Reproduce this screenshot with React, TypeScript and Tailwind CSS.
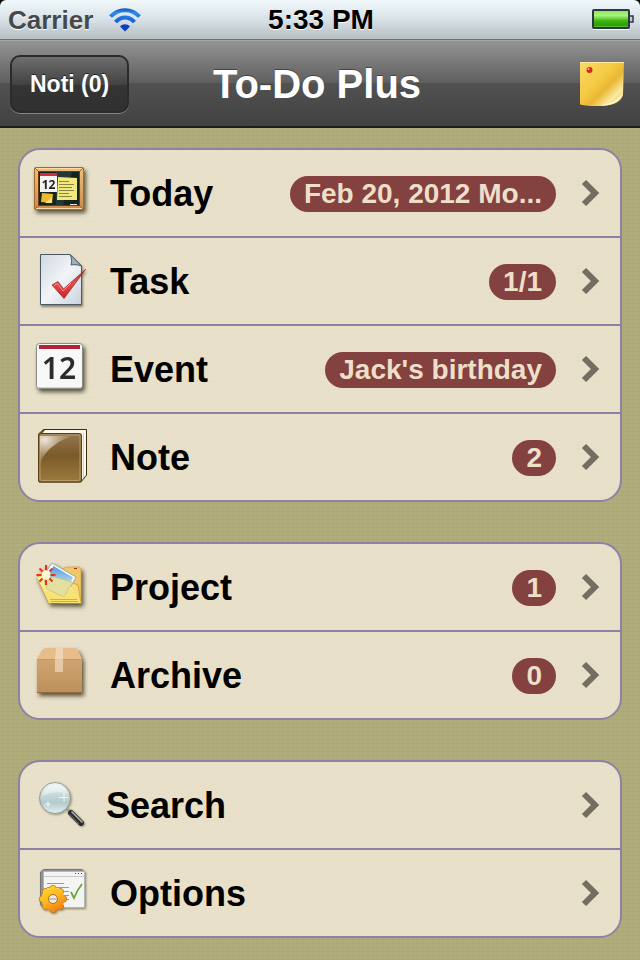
import type { ReactNode } from "react";

interface MenuItem {
  label: string;
  href: string;
  icon: ReactNode;
  badge?: string;
}

const SHADOW = "drop-shadow-[2px_3px_2px_rgba(40,32,10,0.75)]";

function TodayIcon() {
  return (
    <svg viewBox="0 0 64 64" className={`w-16 h-16 shrink-0 ${SHADOW}`} aria-hidden="true">
      <defs>
        <linearGradient id="frame" x1="0" y1="0" x2="0" y2="1">
          <stop offset="0" stopColor="#f3bd78" />
          <stop offset="1" stopColor="#cf8a48" />
        </linearGradient>
      </defs>
      <rect x="4.500" y="6.500" width="49" height="42" rx="1" fill="url(#frame)" stroke="#a3692e" />
      <path d="M5.500 7.500h47M5.500 47.500h47" stroke="#fbdca8" />
      <path d="M5 7l4 4M53 7l-4 4M5 48l4-4M53 48l-4-4" stroke="#9a602a" />
      <rect x="8.500" y="10.500" width="41" height="34" fill="#142420" stroke="#6b3e16" />
      <path d="M26 11h16l-9 33h-7z" fill="#2c4a46" opacity="0.6" />
      <rect x="10" y="12" width="17" height="19" fill="#f5f5f4" />
      <rect x="10" y="12" width="17" height="3" fill="#cf2f49" />
      <text x="18.500" y="27.500" textAnchor="middle" fontSize="12" fontWeight="700" fill="#222" fontFamily="Open Sans, sans-serif">12</text>
      <path d="M28 16l19 1v22H27z" fill="#f2e97c" />
      <path d="M29 20.500h10M29 23.500h15M29 26.500h13M29 29.500h15M29 32.500h10M29 35.500h13" stroke="#8a8446" />
      <path d="M12 32l11 1-1 9-11-1z" fill="#eeb92d" />
      <path d="M15 42l7-6v6z" fill="#ffe27a" />
      <path d="M40 43.500h7" stroke="#e8e8e8" />
    </svg>
  );
}

function TaskIcon() {
  return (
    <svg viewBox="0 0 64 64" className="w-16 h-16 shrink-0 drop-shadow-[1px_2px_1px_rgba(40,32,10,0.5)]" aria-hidden="true">
      <defs>
        <linearGradient id="paper" x1="0" y1="0" x2="1" y2="1">
          <stop offset="0" stopColor="#cfd8e2" />
          <stop offset="0.500" stopColor="#f2f4f7" />
          <stop offset="1" stopColor="#cbd3df" />
        </linearGradient>
        <linearGradient id="tick" x1="0" y1="0" x2="0" y2="1">
          <stop offset="0" stopColor="#a33a3a" />
          <stop offset="0.450" stopColor="#e2504f" />
          <stop offset="1" stopColor="#cf2228" />
        </linearGradient>
      </defs>
      <path d="M10.500 5.500H40L51.500 17v38.500h-41z" fill="url(#paper)" stroke="#4c5866" />
      <path d="M40 5.500c2 4 2 8 1 10.500 3-.5 7-.5 10.500 1z" fill="#a3b0be" stroke="#4c5866" />
      <path d="M22 36l6-3.500 5.500 7.500L55.500 20.500 34 49.500z" fill="url(#tick)" stroke="#9c2b2b" strokeWidth="0.800" />
      <path d="M24 36.500l3.500-2L33 42l8-8" stroke="#f29a96" fill="none" />
    </svg>
  );
}

function EventIcon() {
  return (
    <svg viewBox="0 0 64 64" className={`w-16 h-16 shrink-0 ${SHADOW}`} aria-hidden="true">
      <rect x="6.500" y="6.500" width="46" height="45" rx="3" fill="#f8f8f8" stroke="#8b8b8b" />
      <path d="M8 50.500h43" stroke="#d5d5d5" />
      <rect x="9" y="8" width="41" height="4" fill="#b3243c" />
      <text x="29" y="42" textAnchor="middle" fontSize="30" fontWeight="600" fill="#2b2b2d" fontFamily="Noto Sans, sans-serif">12</text>
    </svg>
  );
}

function NoteIcon() {
  return (
    <svg viewBox="0 0 64 64" className="w-16 h-16 shrink-0" aria-hidden="true">
      <defs>
        <linearGradient id="cover" x1="0" y1="0" x2="0" y2="1">
          <stop offset="0" stopColor="#957850" />
          <stop offset="0.450" stopColor="#7b5a2a" />
          <stop offset="1" stopColor="#9c7b3e" />
        </linearGradient>
        <radialGradient id="shine" cx="0.150" cy="0.150" r="0.900">
          <stop offset="0" stopColor="#f3eee4" stopOpacity="0.950" />
          <stop offset="1" stopColor="#c0a67c" stopOpacity="0.200" />
        </radialGradient>
      </defs>
      <path d="M8.500 9l5-4.500h43V50L51 57H9z" fill="#fbf8ec" stroke="#3f2c0d" />
      <path d="M8.500 9l5-4.500h2L12 8.500z" fill="#6b4a1c" />
      <path d="M53.500 53V8" stroke="#ddd2b2" fill="none" />
      <rect x="8.500" y="8.500" width="43" height="48.500" rx="2" fill="url(#cover)" stroke="#5b3f14" />
      <rect x="10" y="10" width="40" height="45.500" rx="2" fill="none" stroke="#b79b68" />
      <path d="M10 11h32C28 16 16 24 10 38z" fill="url(#shine)" />
    </svg>
  );
}

function ProjectIcon() {
  return (
    <svg viewBox="0 0 64 64" className={`w-16 h-16 shrink-0 ${SHADOW}`} aria-hidden="true">
      <defs>
        <linearGradient id="folder" x1="0" y1="0" x2="0" y2="1">
          <stop offset="0" stopColor="#fbf0ae" />
          <stop offset="1" stopColor="#f5da5c" />
        </linearGradient>
        <linearGradient id="photo" x1="0" y1="0" x2="0" y2="1">
          <stop offset="0" stopColor="#4f9ddb" />
          <stop offset="1" stopColor="#d7ecf5" />
        </linearGradient>
      </defs>
      <path d="M33 14l3-2h13l2 2v34H30z" fill="#efc868" stroke="#d2a544" strokeWidth="0.800" />
      <path d="M44 13.500h3" stroke="#b5271c" />
      <path d="M7 22l7-4 34 12 3 18H19z" fill="#f6dd7d" stroke="#cf9f2a" strokeWidth="0.800" />
      <path d="M22 8l24 14-9 17-27-13z" fill="#fafafa" stroke="#8e9aa2" strokeWidth="0.800" />
      <path d="M23.500 11L43 22.500l-6 11L18 22z" fill="url(#photo)" />
      <path d="M7 22l18 1 15 7 11 18H19z" fill="url(#folder)" />
      <path d="M14 25l10-3 18 5-8 15-17-8z" fill="#e3e0a0" stroke="#c9c07e" strokeWidth="0.800" />
      <path d="M15 36l19 6 6-8 3 2 8 12H19z" fill="#f9e272" />
      <path d="M20 44.500h27M21 46.500h27" stroke="#e0a934" />
      <circle cx="16" cy="20" r="4.500" fill="#fff7d0" />
      <g stroke="#e83312" strokeWidth="2">
        <path d="M16 10v5M16 25v5M6.500 20h5M20.500 20h5" />
        <path d="M9.500 13.500l3 3M19.500 23.500l3 3M22.500 13.500l-3 3M12.500 23.500l-3 3" />
      </g>
    </svg>
  );
}

function ArchiveIcon() {
  return (
    <svg viewBox="0 0 64 64" className={`w-16 h-16 shrink-0 ${SHADOW}`} aria-hidden="true">
      <defs>
        <linearGradient id="box" x1="0" y1="0" x2="0" y2="1">
          <stop offset="0" stopColor="#d0a470" />
          <stop offset="1" stopColor="#bd905b" />
        </linearGradient>
      </defs>
      <path d="M7 16l5-9 3-2h30l3 2 4 9z" fill="#e7bd8c" />
      <rect x="7" y="16" width="45" height="34" rx="1" fill="url(#box)" />
      <path d="M7 16.500h45" stroke="#c39863" />
      <path d="M7 49.500h45" stroke="#94693a" />
      <path d="M26 5h7v24h-8V16z" fill="#f3dfc6" opacity="0.650" />
    </svg>
  );
}

function SearchIcon() {
  return (
    <svg viewBox="0 0 60 64" className="w-15 h-16 shrink-0 drop-shadow-[1px_1px_1px_rgba(40,32,10,0.4)]" aria-hidden="true">
      <defs>
        <linearGradient id="lens" x1="0" y1="0" x2="0" y2="1">
          <stop offset="0" stopColor="#f4f9f8" />
          <stop offset="0.350" stopColor="#cbdcdb" />
          <stop offset="0.650" stopColor="#b3cbcc" />
          <stop offset="1" stopColor="#e4f0ef" />
        </linearGradient>
      </defs>
      <path d="M36 35l4 4" stroke="#9b9b9b" strokeWidth="2" />
      <path d="M41 40l10 10" stroke="#2b2b2b" strokeWidth="6" strokeLinecap="round" />
      <path d="M41.500 38.500l11 11" stroke="#b5b5b5" strokeWidth="1.500" />
      <path d="M39.500 41l9.500 10" stroke="#6e6e6e" />
      <circle cx="25" cy="25" r="15.500" fill="url(#lens)" stroke="#96a09e" />
      <path d="M12 23c1-7 7-11 13-11s11 3 13 9c-9-3-18-2-26 2z" fill="#fff" opacity="0.400" />
      <path d="M34 20v9M29 24.500h9M18 28v6M15 31h6" stroke="#fff" strokeWidth="0.800" />
    </svg>
  );
}

function OptionsIcon() {
  return (
    <svg viewBox="0 0 64 64" className="w-16 h-16 shrink-0 drop-shadow-[1px_1px_1px_rgba(40,32,10,0.5)]" aria-hidden="true">
      <defs>
        <linearGradient id="gear" x1="14" y1="24" x2="30" y2="52" gradientUnits="userSpaceOnUse">
          <stop offset="0" stopColor="#ffdc2e" />
          <stop offset="0.500" stopColor="#fdb51f" />
          <stop offset="1" stopColor="#f0700e" />
        </linearGradient>
      </defs>
      <path d="M10.500 44V11l3-2.500H52l2.500 3V46.500H14z" fill="#8f9296" stroke="#777" />
      <rect x="13.500" y="10.500" width="41" height="36" fill="#f4f4f4" stroke="#b5b5b5" />
      <path d="M14 15.500h40" stroke="#cacaca" />
      <path d="M45 12.500h1M48 12.500h1M51 12.500h1" stroke="#444" />
      <path d="M17 22.500h17M17 26.500h22M22 30.500h17M30 34.500h9M34 38.500h5" stroke="#999" />
      <path d="M41 31l3 6c2-5 4-9 8-14" stroke="#69a838" strokeWidth="1.800" fill="none" />
      {/* dark outline first, then the gear itself on top */}
      <g stroke="#c47a14" strokeWidth="7" strokeLinecap="round">
        <path d="M23 27.500v21M12.500 38h21.010M15.600 30.600l14.800 14.800M30.400 30.600L15.600 45.400" />
      </g>
      <g stroke="url(#gear)" strokeWidth="5.500" strokeLinecap="round">
        <path d="M23 27.500v21M12.500 38h21M15.600 30.600l14.800 14.800M30.400 30.600L15.600 45.400" />
      </g>
      <circle cx="23" cy="38" r="11.500" fill="url(#gear)" />
      <circle cx="23" cy="38" r="4.500" fill="#efece6" stroke="#a86b16" />
      <path d="M19.500 38h7" stroke="#999" />
    </svg>
  );
}

const GROUPS: MenuItem[][] = [
  [
    { label: "Today", href: "#today", icon: <TodayIcon />, badge: "Feb 20, 2012 Mo..." },
    { label: "Task", href: "#task", icon: <TaskIcon />, badge: "1/1" },
    { label: "Event", href: "#event", icon: <EventIcon />, badge: "Jack's birthday" },
    { label: "Note", href: "#note", icon: <NoteIcon />, badge: "2" },
  ],
  [
    { label: "Project", href: "#project", icon: <ProjectIcon />, badge: "1" },
    { label: "Archive", href: "#archive", icon: <ArchiveIcon />, badge: "0" },
  ],
  [
    { label: "Search", href: "#search", icon: <SearchIcon /> },
    { label: "Options", href: "#options", icon: <OptionsIcon /> },
  ],
];

function StatusBar() {
  return (
    <div className="bg-black">
      <div className="grid grid-cols-[1fr_auto_1fr] items-center h-10 pl-2 pr-1.5 rounded-t-md bg-linear-to-b from-[#f1f9fc] via-[#d8e1e6] to-[#b6bec2] border-b border-[#6c7072]">
        <div className="flex items-center gap-4">
          <span className="text-[26px] leading-8 text-[#45494c] [text-shadow:0_1px_0_#fff]">Carrier</span>
          <svg viewBox="0 0 32 24" className="w-8 h-6" aria-label="Wi-Fi" role="img">
            <defs>
              <linearGradient id="wifi" x1="0" y1="0" x2="0" y2="24" gradientUnits="userSpaceOnUse">
                <stop offset="0" stopColor="#0b4fb4" />
                <stop offset="0.200" stopColor="#2f8bea" />
                <stop offset="0.500" stopColor="#1b66dc" />
                <stop offset="1" stopColor="#0a3fc0" />
              </linearGradient>
            </defs>
            <g fill="none" stroke="url(#wifi)" strokeWidth="4">
              <path d="M1.500 8.500C9.500 0 22.500 0 30.500 8.500" />
              <path d="M6.500 14c5.500-6 13.500-6 19 0" />
            </g>
            <path d="M11 18.500c3-3 7-3 10 0l-5 5z" fill="#0a3fc0" />
          </svg>
        </div>
        <span className="text-[28px] leading-8 text-black [text-shadow:0_1px_0_#fff]">5:33 PM</span>
        <svg viewBox="0 0 42 22" className="w-[42px] h-[22px] justify-self-end" aria-label="Battery full" role="img">
          <defs>
            <linearGradient id="battery" x1="0" y1="0" x2="0" y2="1">
              <stop offset="0" stopColor="#8be35a" />
              <stop offset="0.300" stopColor="#a9f57c" />
              <stop offset="0.600" stopColor="#3fb512" />
              <stop offset="0.850" stopColor="#2f9a08" />
              <stop offset="1" stopColor="#7fdc4c" />
            </linearGradient>
          </defs>
          <path d="M1 20.500h36" stroke="#fff" />
          <rect x="1" y="1" width="36" height="18" rx="1" fill="url(#battery)" stroke="#2c3740" strokeWidth="2" />
          <path d="M38 7h3v6h-3" fill="#c4ccd2" stroke="#2c3740" strokeWidth="1.500" />
        </svg>
      </div>
    </div>
  );
}

function NavBar() {
  return (
    <header className="grid grid-cols-[1fr_auto_1fr] items-center h-22 pl-2.5 pr-4 border-t border-t-[#a6a6a6] border-b-2 border-b-[#1d1d1d] bg-[linear-gradient(#939393,#5e5e5e_50%,#515151_50%,#424242)]">
      <button
        type="button"
        className="justify-self-start h-[58px] px-[18px] rounded-[10px] border-2 border-[#2b2b2b] bg-[linear-gradient(#6e6e6e,#414141_52%,#343434_52%,#303030)] shadow-[0_1px_0_#858585] text-[23px] leading-7 text-white [text-shadow:0_-1px_0_#222]"
      >
        Noti (0)
      </button>
      <h1 className="text-[40px] leading-12 text-white [text-shadow:0_-1px_0_#444]">To-Do Plus</h1>
      <button type="button" aria-label="New sticky note" className="justify-self-end">
        <svg viewBox="0 0 44 44" className="block size-11">
          <defs>
            <linearGradient id="sticky" x1="0" y1="0" x2="1" y2="1">
              <stop offset="0" stopColor="#fbd869" />
              <stop offset="0.400" stopColor="#f5cb45" />
              <stop offset="0.600" stopColor="#e9b734" />
              <stop offset="0.780" stopColor="#fbeaa0" />
              <stop offset="1" stopColor="#e6bd45" />
            </linearGradient>
          </defs>
          <path d="M0 0h44l-1 33c-2 8-12 11-26 11-7 0-12-.5-17-1.500z" fill="url(#sticky)" />
          <path d="M0 .5h44" stroke="#fde9a0" />
          <path d="M43 30c-1 9-9 14-26 14 12-2 22-6 26-14z" fill="#fff3bf" />
          <circle cx="9.500" cy="8" r="3" fill="#d62718" />
          <circle cx="8.500" cy="7" r="1" fill="#ffb8a8" />
        </svg>
      </button>
    </header>
  );
}

function MenuRow({ item }: { item: MenuItem }) {
  return (
    <li>
      <a href={item.href} className="flex items-center h-[86px] pl-2.5 pr-5">
        {item.icon}
        <span className="ml-4 pt-0.5 text-[36px] leading-11 text-black">{item.label}</span>
        {item.badge && (
          <span className="ml-auto mt-0.5 px-3.5 rounded-full bg-[#83413f] text-[28px] leading-9 text-[#eedfc8] whitespace-nowrap">
            {item.badge}
          </span>
        )}
        <svg
          viewBox="0 0 20 28"
          className={item.badge ? "ml-6 w-5 h-7 shrink-0" : "ml-auto w-5 h-7 shrink-0"}
          aria-hidden="true"
        >
          <path d="M4 3l11 11L4 25" fill="none" stroke="#736d62" strokeWidth="6" />
        </svg>
      </a>
    </li>
  );
}

export default function App() {
  return (
    <div className="min-h-screen flex flex-col font-['Liberation_Sans',Arial,sans-serif] font-bold bg-[#b0ab7a] bg-[repeating-linear-gradient(0deg,rgba(90,85,40,0.05)_0_1px,transparent_1px_4px),repeating-linear-gradient(90deg,rgba(255,250,200,0.04)_0_1px,transparent_1px_5px)]">
      <StatusBar />
      <NavBar />
      <main className="flex flex-col gap-10 px-[18px] pt-5 pb-[22px]">
        {GROUPS.map((items) => (
          <ul
            key={items[0].label}
            className="rounded-[22px] border-2 border-[#8d82a6] divide-y-2 divide-[#8d82a6] bg-[#e7dfc7] bg-[repeating-linear-gradient(0deg,rgba(255,255,240,0.1)_0_1px,transparent_1px_4px)]"
          >
            {items.map((item) => (
              <MenuRow key={item.label} item={item} />
            ))}
          </ul>
        ))}
      </main>
    </div>
  );
}
